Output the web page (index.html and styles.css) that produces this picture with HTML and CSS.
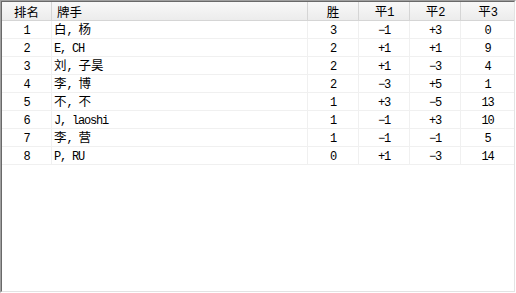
FILE: index.html
```html
<!DOCTYPE html>
<html lang="zh">
<head>
<meta charset="utf-8">
<title>排名</title>
<link rel="stylesheet" href="styles.css">
</head>
<body>
<div class="frame">
  <div class="inner">
    <div class="grid">
      <div class="row head">
        <div class="cell"><span class="cjk">排名</span></div>
        <div class="cell left"><span class="cjk">牌手</span></div>
        <div class="cell"><span class="cjk">胜</span></div>
        <div class="cell"><span class="t"><span class="cjk">平</span>1</span></div>
        <div class="cell"><span class="t"><span class="cjk">平</span>2</span></div>
        <div class="cell last"><span class="t"><span class="cjk">平</span>3</span></div>
      </div>
      <div class="row"><div class="cell">1</div><div class="cell name"><span class="t"><span class="cjk">白</span>, <span class="cjk">杨</span></span></div><div class="cell">3</div><div class="cell">−1</div><div class="cell">+3</div><div class="cell last">0</div></div>
      <div class="row"><div class="cell">2</div><div class="cell name"><span class="t">E, CH</span></div><div class="cell">2</div><div class="cell">+1</div><div class="cell">+1</div><div class="cell last">9</div></div>
      <div class="row"><div class="cell">3</div><div class="cell name"><span class="t"><span class="cjk">刘</span>, <span class="cjk">子昊</span></span></div><div class="cell">2</div><div class="cell">+1</div><div class="cell">−3</div><div class="cell last">4</div></div>
      <div class="row"><div class="cell">4</div><div class="cell name"><span class="t"><span class="cjk">李</span>, <span class="cjk">博</span></span></div><div class="cell">2</div><div class="cell">−3</div><div class="cell">+5</div><div class="cell last">1</div></div>
      <div class="row"><div class="cell">5</div><div class="cell name"><span class="t"><span class="cjk">不</span>, <span class="cjk">不</span></span></div><div class="cell">1</div><div class="cell">+3</div><div class="cell">−5</div><div class="cell last">13</div></div>
      <div class="row"><div class="cell">6</div><div class="cell name"><span class="t">J, laoshi</span></div><div class="cell">1</div><div class="cell">−1</div><div class="cell">+3</div><div class="cell last">10</div></div>
      <div class="row"><div class="cell">7</div><div class="cell name"><span class="t"><span class="cjk">李</span>, <span class="cjk">营</span></span></div><div class="cell">1</div><div class="cell">−1</div><div class="cell">−1</div><div class="cell last">5</div></div>
      <div class="row"><div class="cell">8</div><div class="cell name"><span class="t">P, RU</span></div><div class="cell">0</div><div class="cell">+1</div><div class="cell">−3</div><div class="cell last">14</div></div>
    </div>
  </div>
</div>
</body>
</html>
```

FILE: styles.css
```css
html, body {
  margin: 0;
  padding: 0;
  background: #ffffff;
}

.frame {
  width: 516px;
  height: 293px;
  box-sizing: border-box;
  border: 1px solid;
  border-color: #a0a0a0 #ffffff #ffffff #a0a0a0;
}

.inner {
  height: 100%;
  box-sizing: border-box;
  border: 1px solid;
  border-color: #696969 #e3e3e3 #e3e3e3 #696969;
  background: #ffffff;
  overflow: hidden;
}

.grid {
  width: 512px;
  font-family: "Liberation Mono", "Noto Sans CJK SC", monospace;
  font-size: 12px;
  letter-spacing: -1.2px;
  color: #000000;
}

.row {
  display: grid;
  grid-template-columns: 50px 256px 51px 51px 51px 53px;
  height: 18px;
  box-sizing: border-box;
  border-bottom: 1px solid #f0f0f0;
}

.row.head {
  height: 19px;
  background: linear-gradient(#f8f8f8, #ececec);
  border-bottom: 1px solid #d5d5d5;
}

.cell {
  display: flex;
  align-items: center;
  justify-content: center;
  box-sizing: border-box;
  padding-top: 2px;
  border-right: 1px solid #f0f0f0;
  line-height: 14px;
  white-space: pre;
}

.head .cell {
  border-right-color: #d5d5d5;
}

.cell.last {
  border-right: none;
}

.cell.left {
  justify-content: flex-start;
  padding-left: 5px;
}

.cell.name {
  justify-content: flex-start;
  padding-left: 2px;
}

.t {
  display: block;
}

.cjk {
  font-family: "Noto Sans CJK SC", sans-serif;
  font-size: 12.5px;
  letter-spacing: 0;
  line-height: 12px;
}
```
